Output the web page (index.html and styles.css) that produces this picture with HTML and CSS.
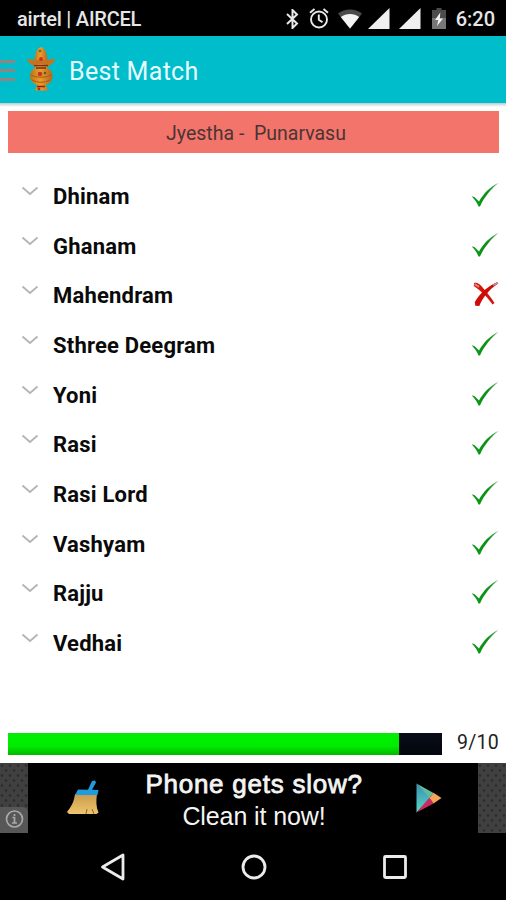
FILE: index.html
```
<!DOCTYPE html>
<html lang="en">

<head>
  <meta charset="UTF-8">
  <meta name="viewport" content="width=device-width, initial-scale=1.0">
  <title>Best Match</title>
  <link rel="stylesheet" href="styles.css">
</head>

<body>
  <svg class="sprite" width="0" height="0">
    <defs>
      <linearGradient id="green" x1="0" y1="1" x2="1" y2="0">
        <stop offset="0" stop-color="#0a9a18" />
        <stop offset=".6" stop-color="#0c8f18" />
        <stop offset="1" stop-color="#5fae66" />
      </linearGradient>
      <linearGradient id="gold" x1="0" y1="0" x2="1" y2="0">
        <stop offset="0" stop-color="#b8741c" />
        <stop offset=".45" stop-color="#ee9c2c" />
        <stop offset="1" stop-color="#b5651a" />
      </linearGradient>
      <linearGradient id="straw" x1="0" y1="0" x2="0" y2="1">
        <stop offset="0" stop-color="#c99a4c" />
        <stop offset="1" stop-color="#efc66c" />
      </linearGradient>
      <linearGradient id="play" x1="0" y1="0" x2="0" y2="1">
        <stop offset="0" stop-color="#3a8fb4" />
        <stop offset="1" stop-color="#58d8c0" />
      </linearGradient>
      <pattern id="dots" width="8" height="10" patternUnits="userSpaceOnUse">
        <rect width="8" height="10" fill="#404040" />
        <circle cx="2" cy="2.5" r="1.3" fill="#2b2b2b" />
        <circle cx="6" cy="7.5" r="1.3" fill="#2b2b2b" />
      </pattern>
    </defs>
    <symbol id="chevron" viewBox="0 0 18 10">
      <path d="M1.500 1.500 9 8l7.500-6.500" fill="none" stroke="#b4b4b4" stroke-width="1.800" />
    </symbol>
    <symbol id="yes" viewBox="0 0 28 26">
      <path d="M.8 14.600c1.500-.3 2.900.7 3.900 1.700l3.300 3.200C12 12.500 18.500 5 27.600.8 20.500 6.800 13.500 14.500 9 24.500L7.500 24.500C6 21 4 17.800.8 14.600z" fill="url(#green)" />
    </symbol>
    <symbol id="no" viewBox="0 0 28 26">
      <path d="M3 2C6 1 8.800 3.200 11.200 6c3.800 4.300 8.200 9.500 12.300 16l-2 1.500C17.500 17.500 11.500 11 2.800 5z" fill="#d3160c" />
      <path d="M3.500 3 8 6" stroke="#ee8270" stroke-width="2" />
      <path d="M26.500 1C18 4.300 9 12 3.800 21l.5 3.800 4 .2C11.800 16.500 18 8.500 26.500 3z" fill="#cf0d08" />
      <path d="m22 4.300 5-2.600" stroke="#c88a88" stroke-width="1.800" />
    </symbol>
    <symbol id="signal" viewBox="0 0 22 22">
      <path d="M21.500 0v21H0z" fill="#efefef" />
    </symbol>
  </svg>

  <div class="phone">
    <header class="status-bar">
      <span class="carrier">airtel | AIRCEL</span>
      <div class="status-icons">
        <svg class="bluetooth" viewBox="0 0 13 20">
          <path d="m1 5 10 9.500L6.500 19V1L11 5.500 1 15" fill="none" stroke="#e8e8e8" stroke-width="2" />
        </svg>
        <svg class="alarm" viewBox="0 0 20 21">
          <g fill="none" stroke="#e8e8e8" stroke-width="1.900">
            <circle cx="10" cy="11.500" r="8" />
            <path d="M9.800 6.500v5.300l3.700 2.500M1 4.800 5.500 1M19 4.800 14.500 1" />
          </g>
        </svg>
        <svg class="wifi" viewBox="0 0 24 20">
          <path d="M0 4.500C7-1 17-1 24 4.500L12 20z" fill="#4a4a4a" />
          <path d="M2.800 8C8 4 16 4 21.200 8L12 19.500z" fill="#f4f4f4" />
        </svg>
        <svg class="signal"><use href="#signal" /></svg>
        <svg class="signal"><use href="#signal" /></svg>
        <svg class="battery" viewBox="0 0 14 21">
          <path d="M4.500 0h5v2H14v8H0V2h4.500z" fill="#4c4c4c" />
          <path d="M0 10h14v11H0z" fill="#777" />
          <path d="M8.300 4.500 3 12h3.300L5 18l6-7.500H7.800z" fill="#f4f4f4" />
        </svg>
      </div>
      <span class="time">6:20</span>
    </header>

    <div class="app-bar">
      <div class="menu"><i></i><i></i><i></i></div>
      <svg class="logo" viewBox="0 0 30 46">
        <path d="M9 11c0-5 3-9 6-10 3.500 1 6 5 6 10l1 5H8z" fill="url(#gold)" />
        <path d="M.8 12.500c3 1 5.500 1.500 8 1.300h12c3 0 5.500-.5 8.400-1.300-1 4.500-4.300 6.300-6.500 7.500H8C4.500 18.500 2 16.500.8 12.500z" fill="#c5731f" />
        <path d="M8 18h14l-1 4c4.500 2 5.500 5 5.500 8.500 0 5-3.500 7.500-7 8.500l3 5.500h-14l3-5.500C7 37.500 4 35.500 4 30.500c0-4 1.500-6.500 5-8.500z" fill="url(#gold)" />
        <path d="M8 19.500h14M10 22h10M11 40.500h8" stroke="#7a2d12" stroke-width="1.300" />
        <path d="M5 29c6 3 14 3 20 0M6 34c6 3 12 3 18 0" fill="none" stroke="#a65a18" />
        <circle cx="15" cy="13" r="1.900" fill="#d3281c" />
        <circle cx="14" cy="28" r="2.300" fill="#c3371c" />
        <circle cx="14" cy="5" r="1.300" fill="#586b3a" />
        <circle cx="19" cy="27" r="1.300" fill="#51602f" />
        <circle cx="13" cy="43" r="1.400" fill="#c02818" />
      </svg>
      <h1>Best Match</h1>
    </div>

    <main class="content">
      <div class="pair">Jyestha -&nbsp; Punarvasu</div>

      <ul class="list">
        <li class="row"><svg class="chevron"><use href="#chevron" /></svg><span>Dhinam</span><svg class="mark"><use href="#yes" /></svg></li>
        <li class="row"><svg class="chevron"><use href="#chevron" /></svg><span>Ghanam</span><svg class="mark"><use href="#yes" /></svg></li>
        <li class="row"><svg class="chevron"><use href="#chevron" /></svg><span>Mahendram</span><svg class="mark"><use href="#no" /></svg></li>
        <li class="row"><svg class="chevron"><use href="#chevron" /></svg><span>Sthree Deegram</span><svg class="mark"><use href="#yes" /></svg></li>
        <li class="row"><svg class="chevron"><use href="#chevron" /></svg><span>Yoni</span><svg class="mark"><use href="#yes" /></svg></li>
        <li class="row"><svg class="chevron"><use href="#chevron" /></svg><span>Rasi</span><svg class="mark"><use href="#yes" /></svg></li>
        <li class="row"><svg class="chevron"><use href="#chevron" /></svg><span>Rasi Lord</span><svg class="mark"><use href="#yes" /></svg></li>
        <li class="row"><svg class="chevron"><use href="#chevron" /></svg><span>Vashyam</span><svg class="mark"><use href="#yes" /></svg></li>
        <li class="row"><svg class="chevron"><use href="#chevron" /></svg><span>Rajju</span><svg class="mark"><use href="#yes" /></svg></li>
        <li class="row"><svg class="chevron"><use href="#chevron" /></svg><span>Vedhai</span><svg class="mark"><use href="#yes" /></svg></li>
      </ul>

      <div class="score">
        <div class="bar">
          <div class="fill" style="width: 90%"></div>
        </div>
        <span>9/10</span>
      </div>
    </main>

    <div class="ad">
      <svg class="ad-side" width="28" height="70" viewBox="0 0 28 70">
        <rect width="28" height="70" fill="url(#dots)" />
        <path d="M0 44h22q6 0 6 6v20H0z" fill="#575757" />
        <g fill="none" stroke="#a9a9a9" stroke-width="1.700">
          <circle cx="14.500" cy="56" r="8" />
          <path d="M12.500 54.500h2v5M12 60h5M14.500 51v2" />
        </g>
      </svg>
      <svg class="broom" viewBox="0 0 34 36">
        <path d="M9 14h22c-1 7-1 13 1.500 18.500l-2 1.500H3l-2-2C5 27 8 22 9 14z" fill="url(#straw)" />
        <path d="M20 34l1-5M28 34l-2-5" stroke="#8d6428" />
        <path d="m12 9.500 10 .3L26 1l3-.5 1 2-4 7.300 6.500.2-1 5H9z" fill="#1f9be0" />
      </svg>
      <div class="ad-text">
        <strong>Phone gets slow?</strong>
        <span>Clean it now!</span>
      </div>
      <svg class="play" viewBox="0 0 26 30">
        <path d="M.5.500v29L15 15z" fill="url(#play)" />
        <path d="m.5.500 17 9.500-4 4.500z" fill="#64bca0" />
        <path d="m.5 29.500 17-9-4-6z" fill="#c92a62" />
        <path d="m17.500 9.800 8 5.200-8 5.500-4-5.800z" fill="#f2a45c" />
      </svg>
      <svg class="ad-side" width="28" height="70" viewBox="0 0 28 70">
        <rect width="28" height="70" fill="url(#dots)" />
      </svg>
    </div>

    <nav class="nav-bar">
      <svg viewBox="0 0 28 28"><path d="M24 2v24L3.500 14z" /></svg>
      <svg viewBox="0 0 28 28"><circle cx="14" cy="14" r="11" /></svg>
      <svg viewBox="0 0 28 28"><rect x="3.500" y="3.500" width="21" height="21" rx="1" /></svg>
    </nav>
  </div>
</body>

</html>
```
FILE: styles.css
```
* {
  box-sizing: border-box;
}

body {
  margin: 0;
  font-family: Roboto, "Liberation Sans", sans-serif;
  background: #fff;
}

svg {
  display: block;
  flex-shrink: 0;
}

.sprite {
  position: absolute;
}

.phone {
  width: 506px;
  height: 900px;
  display: flex;
  flex-direction: column;
  overflow: hidden;
}

.status-bar {
  height: 36px;
  padding: 2px 11px 0 17px;
  display: flex;
  align-items: center;
  background: #000;
  color: #e6e6e6;
  font-weight: 500;
}

.carrier {
  font-size: 20px;
  letter-spacing: -.22px;
}

.status-icons {
  margin-left: auto;
  padding-bottom: 1px;
  display: flex;
  align-items: center;
}

.bluetooth {
  width: 13px;
  height: 20px;
  margin-right: 10px;
}

.alarm {
  width: 20px;
  height: 21px;
  margin-right: 9px;
}

.wifi {
  width: 24px;
  height: 20px;
  margin-right: 6px;
}

.signal {
  width: 22px;
  height: 22px;
  margin-right: 9px;
}

.battery {
  width: 14px;
  height: 21px;
  margin: 0 10px 0 2px;
}

.time {
  font-size: 20px;
}

.app-bar {
  height: 67px;
  padding-top: 2px;
  display: flex;
  align-items: center;
  background: #00bdcc;
}

.menu {
  width: 15px;
  display: flex;
  flex-direction: column;
  gap: 6px;
}

.menu i {
  height: 3px;
  background: #94837f;
}

.logo {
  width: 30px;
  height: 46px;
  margin: 0 13px 3px 11px;
}

h1 {
  margin: 0;
  padding-top: 1px;
  font-size: 25px;
  font-weight: 400;
  letter-spacing: .3px;
  color: #e8fcff;
}

.content {
  height: 660px;
  padding: 8px 7px 0 8px;
  display: flex;
  flex-direction: column;
  background: linear-gradient(#b9cdd0, #fff 4px);
}

.pair {
  height: 42px;
  padding: 3px 0 0 5px;
  display: flex;
  align-items: center;
  justify-content: center;
  background: #f3746b;
  color: #4b3434;
  font-size: 19.5px;
}

.list {
  margin: 18px 0 0;
  padding: 0;
  list-style: none;
}

.row {
  height: 49.7px;
  padding-left: 13px;
  display: flex;
  align-items: center;
  color: #0a0a0a;
  font-size: 22px;
  font-weight: 700;
  letter-spacing: .2px;
}

.row span {
  padding-top: 1px;
}

.chevron {
  width: 18px;
  height: 10px;
  margin: 0 14px 10px 0;
}

.mark {
  width: 28px;
  height: 26px;
  margin: 0 0 2px auto;
}

.score {
  margin-top: auto;
  margin-bottom: 8px;
  display: flex;
  align-items: center;
  justify-content: space-between;
  color: #222;
  font-size: 19.5px;
  line-height: 20px;
  letter-spacing: .3px;
}

.score span {
  padding-bottom: 2px;
}

.bar {
  width: 434px;
  height: 22px;
  background: linear-gradient(#0a0d18, #02060e);
}

.fill {
  height: 100%;
  background: linear-gradient(#0be40b, #00f000 15%, #00ec00 60%, #00b800);
}

.ad {
  height: 70px;
  display: flex;
  align-items: center;
  background: #000;
  color: #f4f4f4;
  font-family: "Liberation Sans", Arial, sans-serif;
}

.broom {
  width: 34px;
  height: 36px;
  margin-left: 38px;
}

.ad-text {
  width: 308px;
  padding-top: 3px;
  display: flex;
  flex-direction: column;
  align-items: center;
  line-height: 32px;
}

.ad-text strong {
  font-size: 26px;
  font-weight: 400;
  letter-spacing: .75px;
  -webkit-text-stroke: .8px #f4f4f4;
}

.ad-text span {
  font-size: 25px;
  letter-spacing: -.1px;
}

.play {
  width: 26px;
  height: 30px;
  margin: 0 auto 0 8px;
}

.nav-bar {
  height: 67px;
  padding: 0 97px 0 99px;
  display: flex;
  align-items: center;
  justify-content: space-between;
  background: #000;
}

.nav-bar svg {
  width: 28px;
  height: 28px;
  fill: none;
  stroke: #ececec;
  stroke-width: 2.8;
  stroke-linejoin: round;
}
```
